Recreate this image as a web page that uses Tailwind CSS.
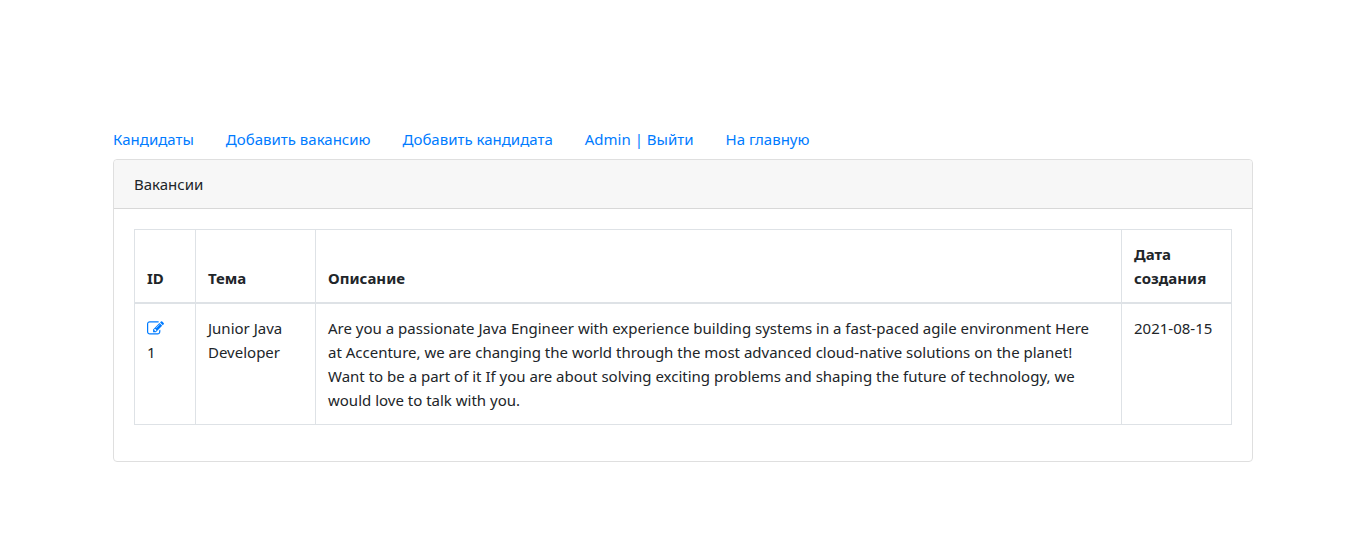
<!DOCTYPE html>
<html lang="ru">
<head>
<meta charset="utf-8">
<meta name="viewport" content="width=device-width, initial-scale=1">
<title>Вакансии</title>
<script src="https://cdn.jsdelivr.net/npm/@tailwindcss/browser@4"></script>
</head>
<body class="bg-white font-['Segoe_UI','Noto_Sans',sans-serif] text-[15px] leading-6 text-[#212529]">
<div class="mx-auto max-w-[1140px] pt-[119px]">
  <nav>
    <ul class="flex flex-wrap gap-x-8 text-[#007bff]">
      <li><a href="#" class="block py-2">Кандидаты</a></li>
      <li><a href="#" class="block py-2">Добавить вакансию</a></li>
      <li><a href="#" class="block py-2">Добавить кандидата</a></li>
      <li><a href="#" class="block py-2">Admin | Выйти</a></li>
      <li><a href="#" class="block py-2">На главную</a></li>
    </ul>
  </nav>
  <main class="rounded border border-[#dfdfdf]">
    <h1 class="rounded-t border-b border-[#d8d8d8] bg-[#f7f7f7] px-5 py-3">Вакансии</h1>
    <div class="px-5 pt-5 pb-9">
      <table class="w-full border-collapse text-left">
        <thead class="align-bottom">
          <tr>
            <th class="w-[61px] border border-b-2 border-[#dee2e6] p-3 font-bold">ID</th>
            <th class="w-[120px] border border-b-2 border-[#dee2e6] p-3 font-bold">Тема</th>
            <th class="border border-b-2 border-[#dee2e6] p-3 font-bold">Описание</th>
            <th class="w-[110px] border border-b-2 border-[#dee2e6] p-3 font-bold">Дата создания</th>
          </tr>
        </thead>
        <tbody class="align-top">
          <tr>
            <td class="border border-[#dee2e6] p-3">
              <a href="#" aria-label="Редактировать" class="flex h-6 items-center text-[#007bff]">
                <svg class="size-[17px]" viewBox="0 0 1792 1792" fill="currentColor" aria-hidden="true"><path d="M888 1184l116-116-152-152-116 116v56h96v96h56zm440-720q-16-16-33 1l-350 350q-17 17-1 33t33-1l350-350q17-17 1-33zm80 594v190q0 119-84.5 203.5t-203.5 84.5h-832q-119 0-203.5-84.5t-84.5-203.5v-832q0-119 84.5-203.5t203.5-84.5h832q63 0 117 25 15 7 18 23 3 17-9 29l-49 49q-14 14-32 8-23-6-45-6h-832q-66 0-113 47t-47 113v832q0 66 47 113t113 47h832q66 0 113-47t47-113v-126q0-13 9-22l64-64q15-15 35-7t20 29zm-96-738l288 288-672 672h-288v-288zm444 132l-92 92-288-288 92-92q28-28 68-28t68 28l152 152q28 28 28 68t-28 68z"/></svg>
              </a>
              1
            </td>
            <td class="border border-[#dee2e6] p-3">Junior Java Developer</td>
            <td class="border border-[#dee2e6] py-3 pr-6 pl-3">Are you a passionate Java Engineer with experience building systems in a fast-paced agile environment Here at Accenture, we are changing the world through the most advanced cloud-native solutions on the planet! Want to be a part of it If you are about solving exciting problems and shaping the future of technology, we would love to talk with you.</td>
            <td class="border border-[#dee2e6] p-3 whitespace-nowrap">2021-08-15</td>
          </tr>
        </tbody>
      </table>
    </div>
  </main>
</div>
</body>
</html>
